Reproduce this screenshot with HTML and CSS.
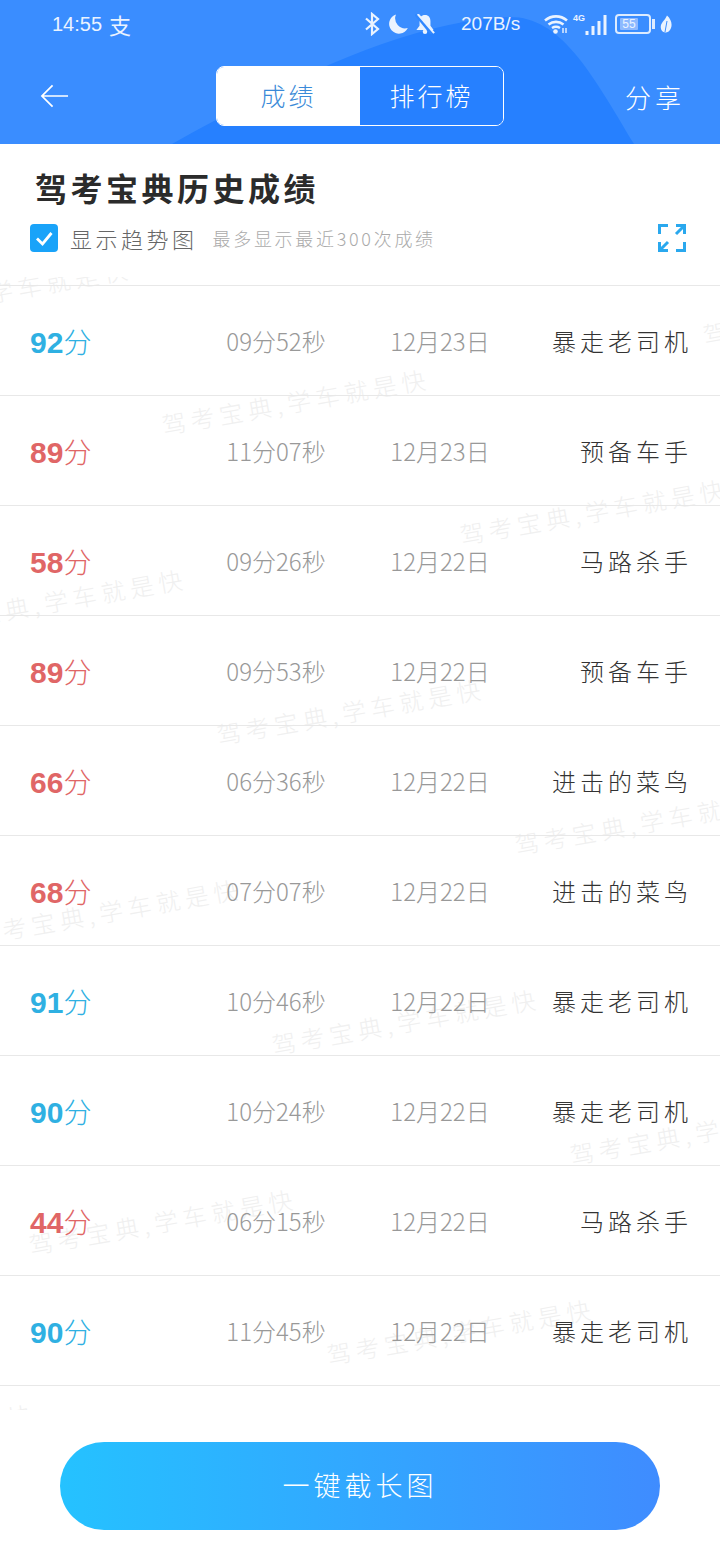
FILE: index.html

```html
<!DOCTYPE html>
<html lang="zh-CN">
<head>
  <meta charset="UTF-8" />
  <meta name="viewport" content="width=device-width, initial-scale=1" />
  <title>驾考宝典历史成绩</title>
  <link rel="stylesheet" href="styles.css">
</head>
<body>

  <header class="top">
    <svg class="top-curve" viewBox="0 0 720 144" aria-hidden="true">
      <path d="M172 144C260 95 400 20 510 17C560 17 590 70 634 144Z" fill="#2680ff" />
    </svg>

    <div class="status">
      <span class="status-time">14:55</span>
      <span class="status-app">支</span>
      <span class="status-right">
        <svg class="ico-bt" viewBox="0 0 16 24"><path d="M2 6.500L14 17L8 22V2L14 7L2 17.500" fill="none" stroke="#eaf3ff" stroke-width="2.200" /></svg>
        <svg class="ico-moon" viewBox="0 0 20 20"><path d="M8 0.500A9.800 9.800 0 1 0 19.800 14A10 10 0 0 1 8 0.500Z" fill="#eaf3ff" /></svg>
        <svg class="ico-bell" viewBox="0 0 22 22"><path d="M11 1C7 1 5 4 5 8V13L1.500 17.500H20.500L17 13V8C17 4 15 1 11 1Z" fill="#eaf3ff" /><circle cx="11" cy="19.500" r="2.500" fill="#eaf3ff" /><path d="M1 0L19 22" stroke="#2f87ff" stroke-width="4" /><path d="M3 0L21 21" stroke="#eaf3ff" stroke-width="2.200" /></svg>
        <span class="status-speed">207B/s</span>
        <svg class="ico-wifi" viewBox="0 0 26 20"><path d="M1 6.500C7.500 1 16.500 1 23 6.500M4.500 10.500C9 7 15 7 19.500 10.500M8 14C10.500 12.500 13.500 12.500 16 14" fill="none" stroke="#eaf3ff" stroke-width="2.600" /><circle cx="11.500" cy="17.500" r="2.300" fill="#eaf3ff" /><path d="M19 14V19M22 14V19" stroke="#eaf3ff" stroke-width="1.400" /></svg>
        <span class="status-net">
          <span class="status-4g">4G</span>
          <svg class="ico-signal" viewBox="0 0 22 20"><path d="M2 16V20M8 11V20M14 6V20M20 0V20" stroke="#eaf3ff" stroke-width="3" /></svg>
        </span>
        <span class="battery"><span class="battery-fill">55</span></span>
        <span class="battery-tip"></span>
        <svg class="ico-leaf" viewBox="0 0 12 18"><path d="M7 0.500C11 4 12.500 9 11 13C10 16 7.500 17.500 5.500 17.500C2 17.500 0 14 1 10C2 7 5 5 7 0.500Z" fill="#eaf3ff" /><path d="M7 6L5 17" stroke="#3a8dff" stroke-width="1" /></svg>
      </span>
    </div>

    <nav class="nav">
      <svg class="nav-back" viewBox="0 0 30 24"><path d="M29 12H2M13 1L2 12L13 23" fill="none" stroke="#fff" stroke-width="1.800" /></svg>
      <div class="tabs">
        <div class="tab tab-on">成绩</div>
        <div class="tab">排行榜</div>
      </div>
      <div class="nav-share">分享</div>
    </nav>
  </header>

  <section class="intro">
    <h1 class="intro-title">驾考宝典历史成绩</h1>
    <div class="intro-bar">
      <span class="check">
        <svg viewBox="0 0 28 28"><path d="M7 14.500L12.500 20L21.500 9" fill="none" stroke="#fff" stroke-width="2.800" /></svg>
      </span>
      <span class="intro-label">显示趋势图</span>
      <span class="intro-note">最多显示最近300次成绩</span>
      <svg class="intro-expand" viewBox="0 0 28 28"><path d="M1.500 10V1.500H10M18 1.500H26.500V10M1.500 18V26.500H10M18 26.500H26.500V18M26 2L18 10M2 26L10 18" fill="none" stroke="#2aa8ee" stroke-width="3" /></svg>
    </div>
  </section>

  <main class="list">
    <div class="marks">
      <span class="mark m1">驾考宝典,学车就是快</span>
      <span class="mark m2">驾考宝典,学车就是快</span>
      <span class="mark m3">驾考宝典,学车就是快</span>
      <span class="mark m4">驾考宝典,学车就是快</span>
      <span class="mark m5">驾考宝典,学车就是快</span>
      <span class="mark m6">驾考宝典,学车就是快</span>
      <span class="mark m7">驾考宝典,学车就是快</span>
      <span class="mark m8">驾考宝典,学车就是快</span>
      <span class="mark m9">驾考宝典,学车就是快</span>
      <span class="mark m10">驾考宝典,学车就是快</span>
      <span class="mark m11">驾考宝典,学车就是快</span>
      <span class="mark m12">驾考宝典,学车就是快</span>
      <span class="mark m13">驾考宝典,学车就是快</span>
    </div>

    <div class="row"><span class="score good"><b>92</b>分</span><span class="time">09分52秒</span><span class="date">12月23日</span><span class="name">暴走老司机</span></div>
    <div class="row"><span class="score bad"><b>89</b>分</span><span class="time">11分07秒</span><span class="date">12月23日</span><span class="name">预备车手</span></div>
    <div class="row"><span class="score bad"><b>58</b>分</span><span class="time">09分26秒</span><span class="date">12月22日</span><span class="name">马路杀手</span></div>
    <div class="row"><span class="score bad"><b>89</b>分</span><span class="time">09分53秒</span><span class="date">12月22日</span><span class="name">预备车手</span></div>
    <div class="row"><span class="score bad"><b>66</b>分</span><span class="time">06分36秒</span><span class="date">12月22日</span><span class="name">进击的菜鸟</span></div>
    <div class="row"><span class="score bad"><b>68</b>分</span><span class="time">07分07秒</span><span class="date">12月22日</span><span class="name">进击的菜鸟</span></div>
    <div class="row"><span class="score good"><b>91</b>分</span><span class="time">10分46秒</span><span class="date">12月22日</span><span class="name">暴走老司机</span></div>
    <div class="row"><span class="score good"><b>90</b>分</span><span class="time">10分24秒</span><span class="date">12月22日</span><span class="name">暴走老司机</span></div>
    <div class="row"><span class="score bad"><b>44</b>分</span><span class="time">06分15秒</span><span class="date">12月22日</span><span class="name">马路杀手</span></div>
    <div class="row"><span class="score good"><b>90</b>分</span><span class="time">11分45秒</span><span class="date">12月22日</span><span class="name">暴走老司机</span></div>
    <div class="row row-end"></div>
  </main>

  <footer class="foot">
    <button class="foot-btn">一键截长图</button>
  </footer>

</body>
</html>
```

FILE: styles.css

```css
body {
  margin: 0;
  height: 1560px;
  overflow: hidden;
  background-color: #fff;
  font-family: "Noto Sans CJK SC", "Noto Sans", sans-serif;
  font-weight: 300;
}

/* header */
.top {
  position: relative;
  height: 144px;
  background-color: #3a8dff;
  color: #fff;
  overflow: hidden;
}
.top-curve {
  position: absolute;
  left: 0;
  top: 0;
  width: 720px;
  height: 144px;
}
.status {
  position: relative;
  display: flex;
  align-items: center;
  height: 48px;
  padding: 0 48px 0 52px;
  color: #eaf3ff;
  font-family: "Liberation Sans", sans-serif;
  font-size: 20px;
}
.status-app {
  margin-left: 7px;
  font-family: "Noto Sans CJK SC", sans-serif;
  font-size: 22px;
  font-weight: 400;
}
.status-right {
  display: flex;
  align-items: center;
  margin-left: auto;
}
.ico-bt {
  width: 16px;
  height: 24px;
  margin-right: 8px;
}
.ico-moon {
  width: 20px;
  height: 20px;
  margin-right: 7px;
}
.ico-bell {
  width: 20px;
  height: 20px;
}
.status-speed {
  width: 57px;
  margin-left: 26px;
  margin-right: 26px;
  font-size: 19px;
  white-space: nowrap;
}
.ico-wifi {
  width: 26px;
  height: 20px;
}
.status-net {
  position: relative;
  display: flex;
  width: 34px;
  height: 24px;
  margin-left: 3px;
}
.status-4g {
  position: absolute;
  left: 0;
  top: 1px;
  font-size: 9px;
  font-weight: bold;
  line-height: 10px;
}
.ico-signal {
  position: absolute;
  right: 0;
  bottom: 1px;
  width: 22px;
  height: 20px;
}
.battery {
  display: block;
  box-sizing: border-box;
  width: 36px;
  height: 20px;
  margin-left: 8px;
  padding: 2px;
  border: 2px solid #dcebff;
  border-radius: 4px;
}
.battery-fill {
  display: block;
  width: 18px;
  height: 12px;
  margin-left: 1px;
  background-color: #8db9ff;
  border-radius: 1px;
  font-size: 12px;
  line-height: 12px;
  text-align: center;
}
.battery-tip {
  width: 3px;
  height: 10px;
  margin-left: 1px;
  background-color: #dcebff;
}
.ico-leaf {
  width: 12px;
  height: 18px;
  margin-left: 5px;
}

.nav {
  position: relative;
  display: flex;
  align-items: center;
  height: 96px;
  padding: 0 39px 0 40px;
}
.nav-back {
  width: 29px;
  height: 24px;
}
.tabs {
  display: flex;
  box-sizing: border-box;
  width: 288px;
  height: 60px;
  margin-left: 147px;
  border: 1px solid #fff;
  border-radius: 8px;
  overflow: hidden;
}
.tab {
  flex: 1;
  font-size: 25px;
  line-height: 56px;
  letter-spacing: 3px;
  text-align: center;
  background-color: #2680ff;
}
.tab-on {
  flex: 0 0 143px;
  background-color: #fff;
  color: #3a8ad8;
}
.nav-share {
  margin-left: auto;
  margin-right: -4px;
  font-size: 26px;
  letter-spacing: 4px;
}

/* title block */
.intro {
  box-sizing: border-box;
  height: 133px;
  padding: 20px 34px 0 30px;
}
.intro-title {
  margin: 0 0 0 5px;
  font-size: 32px;
  font-weight: bold;
  line-height: 46px;
  letter-spacing: 3.500px;
  color: #2b2b2b;
}
.intro-bar {
  display: flex;
  align-items: center;
  margin-top: 14px;
  height: 28px;
}
.check {
  display: block;
  width: 28px;
  height: 28px;
  background-color: #19a3f9;
  border-radius: 4px;
}
.check svg {
  display: block;
}
.intro-label {
  margin-left: 12px;
  font-size: 22px;
  letter-spacing: 3.500px;
  color: #666;
}
.intro-note {
  margin-left: 15px;
  font-size: 18px;
  letter-spacing: 2.700px;
  color: #aaa;
}
.intro-expand {
  width: 28px;
  height: 28px;
  margin-left: auto;
}

/* score list */
.list {
  position: relative;
  box-sizing: border-box;
  height: 1133px;
  padding-top: 8px;
  overflow: hidden;
}
.marks {
  position: absolute;
  left: 0;
  top: 0;
  width: 720px;
  height: 1133px;
}
.mark {
  position: absolute;
  font-size: 24px;
  line-height: 32px;
  letter-spacing: 5px;
  white-space: nowrap;
  color: #f0f0f0;
  transform: rotate(-10deg);
  transform-origin: left center;
}
.m1 { left: -136px; top: 22px; }
.m2 { left: -81px; top: 332px; }
.m3 { left: -26px; top: 642px; }
.m4 { left: 29px; top: 952px; }
.m5 { left: 162px; top: 132px; }
.m6 { left: 217px; top: 442px; }
.m7 { left: 272px; top: 752px; }
.m8 { left: 327px; top: 1062px; }
.m9 { left: 460px; top: 242px; }
.m10 { left: 515px; top: 552px; }
.m11 { left: 570px; top: 862px; }
.m12 { left: 703px; top: 42px; }
.m13 { left: -232px; top: 1167px; }

.row {
  position: relative;
  display: grid;
  grid-template-columns: 166px 160px 168px 1fr;
  align-items: center;
  box-sizing: border-box;
  height: 110px;
  padding: 0 32px 0 30px;
  border-top: 1px solid #e8e8e8;
}
.row-end {
  height: 1px;
}
.score {
  font-size: 28px;
}
.score b {
  font-family: "Liberation Sans", sans-serif;
  font-size: 30px;
  font-weight: bold;
}
.good {
  color: #2fb0e2;
}
.bad {
  color: #e06666;
}
.time,
.date {
  font-size: 24px;
  color: #999;
  text-align: center;
}
.name {
  font-size: 24px;
  letter-spacing: 4px;
  margin-right: -4px;
  color: #333;
  text-align: right;
}

/* bottom button */
.foot {
  position: relative;
  box-sizing: border-box;
  height: 150px;
  padding: 32px 60px 0;
  background-color: #fff;
}
.foot-btn {
  display: block;
  width: 600px;
  height: 88px;
  padding: 0 0 4px;
  border: none;
  border-radius: 44px;
  background: linear-gradient(90deg, #25c2ff, #3f8cff);
  color: #fff;
  font-family: "Noto Sans CJK SC", sans-serif;
  font-size: 27px;
  font-weight: 300;
  letter-spacing: 4px;
}
```
